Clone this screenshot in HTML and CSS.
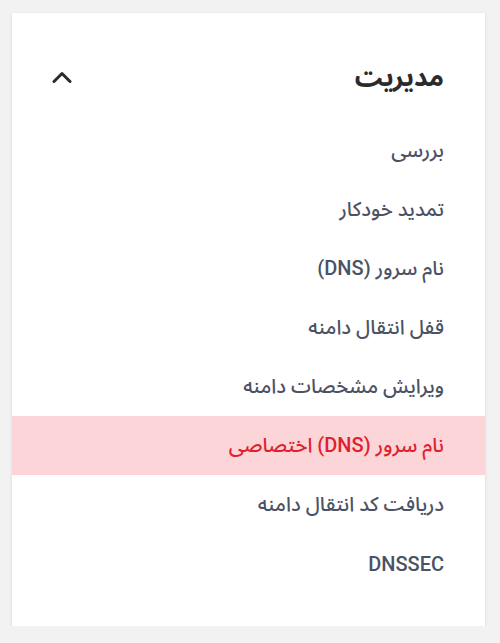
FILE: index.html
```html
<!DOCTYPE html>
<html lang="fa" dir="rtl">
<head>
<meta charset="utf-8">
<link rel="stylesheet" href="styles.css">
</head>
<body>
<div class="card">
  <div class="header">
    <span class="title">مدیریت</span>
    <svg class="chevron" width="20" height="12" viewBox="0 0 20 12"><path d="M2 10.5 L10 2.5 L18 10.5" fill="none" stroke="#2b2b2b" stroke-width="3" stroke-linecap="round" stroke-linejoin="round"/></svg>
  </div>
  <ul class="menu">
    <li class="item">بررسی</li>
    <li class="item">تمدید خودکار</li>
    <li class="item">نام سرور (DNS)</li>
    <li class="item">قفل انتقال دامنه</li>
    <li class="item">ویرایش مشخصات دامنه</li>
    <li class="item active">نام سرور (DNS) اختصاصی</li>
    <li class="item">دریافت کد انتقال دامنه</li>
    <li class="item">DNSSEC</li>
  </ul>
</div>
</body>
</html>
```
FILE: styles.css
```css
html, body {
  margin: 0;
  padding: 0;
  background: #f2f2f2;
  font-family: Roboto, "Noto Sans Arabic", "DejaVu Sans", sans-serif;
}
.card {
  margin: 13px 15px 0 12px;
  width: 473px;
  height: 613px;
  background: #ffffff;
  box-shadow: 0 1px 3px rgba(0,0,0,0.12);
  box-sizing: border-box;
}
.header {
  display: flex;
  align-items: center;
  justify-content: space-between;
  padding: 44px 41px 0 40px;
  height: 40px;
  box-sizing: content-box;
  margin-bottom: 24px;
}
.title {
  font-size: 26px;
  font-weight: 700;
  color: #2b2b2b;
  line-height: 40px;
}
.chevron {
  display: block;
}
.menu {
  list-style: none;
  margin: 0;
  padding: 0;
}
.item {
  height: 59px;
  display: flex;
  align-items: center;
  padding: 0 41px;
  font-size: 20px;
  font-weight: 500;
  color: #4b5263;
}
.item.active {
  background: #fbd5d7;
  color: #e0202e;
}
```
